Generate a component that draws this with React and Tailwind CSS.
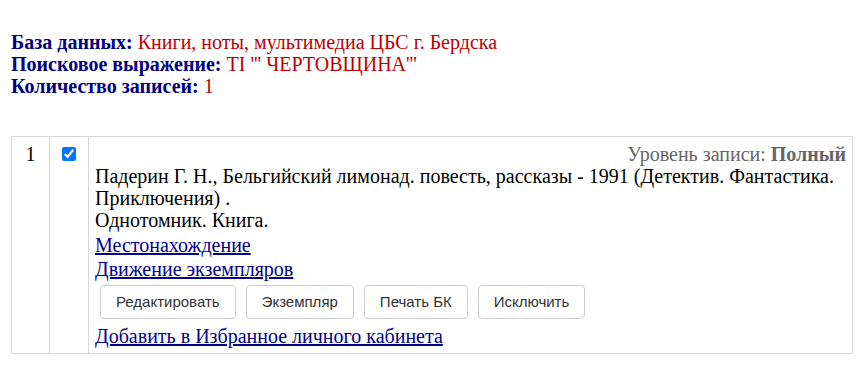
import React from "react";

const serif = { fontFamily: '"Liberation Serif", "Times New Roman", serif' };

export default function App() {
  return (
    <div className="bg-white w-[868px] h-[374px] pl-[11px] pt-[31px] text-[20px] leading-[22px] text-black" style={serif}>
      <div>
        <div><b className="text-[#000080]">База данных:</b> <span className="text-[#c00000]">Книги, ноты, мультимедиа ЦБС г. Бердска</span></div>
        <div><b className="text-[#000080]">Поисковое выражение:</b> <span className="text-[#c00000]">TI &#39;&#39;&#39; ЧЕРТОВЩИНА&#39;&#39;&#39;</span></div>
        <div><b className="text-[#000080]">Количество записей:</b> <span className="text-[#c00000]">1</span></div>
      </div>
      <table className="mt-[39px] w-[842px] border-collapse border border-[#d6d6d6]">
        <tbody>
          <tr>
            <td className="w-[38px] border border-[#d6d6d6] align-top text-center pt-[6px]">1</td>
            <td className="w-[39px] border border-[#d6d6d6] align-top text-center pt-[10px]">
              <input type="checkbox" defaultChecked className="w-[14px] h-[14px] m-0 align-top" />
            </td>
            <td className="border border-[#d6d6d6] align-top px-[6px] py-[6px]">
              <div className="text-right text-[#666666]">Уровень записи: <b>Полный</b></div>
              <div>Падерин Г. Н., Бельгийский лимонад. повесть, рассказы - 1991 (Детектив. Фантастика. Приключения) .</div>
              <div>Однотомник. Книга.</div>
              <div className="leading-[24px] mt-[2px]"><a href="#" className="text-[#00008b] underline">Местонахождение</a></div>
              <div className="leading-[24px]"><a href="#" className="text-[#00008b] underline">Движение экземпляров</a></div>
              <div className="flex gap-[10px] pl-[5px] mt-[4px] mb-[6px]" style={{ fontFamily: '"Liberation Sans", Arial, sans-serif' }}>
                {["Редактировать", "Экземпляр", "Печать БК", "Исключить"].map((t) => (
                  <button key={t} className="h-[34px] px-[15px] text-[15px] text-[#333333] bg-white border border-[#cccccc] rounded-[4px]">{t}</button>
                ))}
              </div>
              <div><a href="#" className="text-[#00008b] underline">Добавить в Избранное личного кабинета</a></div>
            </td>
          </tr>
        </tbody>
      </table>
    </div>
  );
}
